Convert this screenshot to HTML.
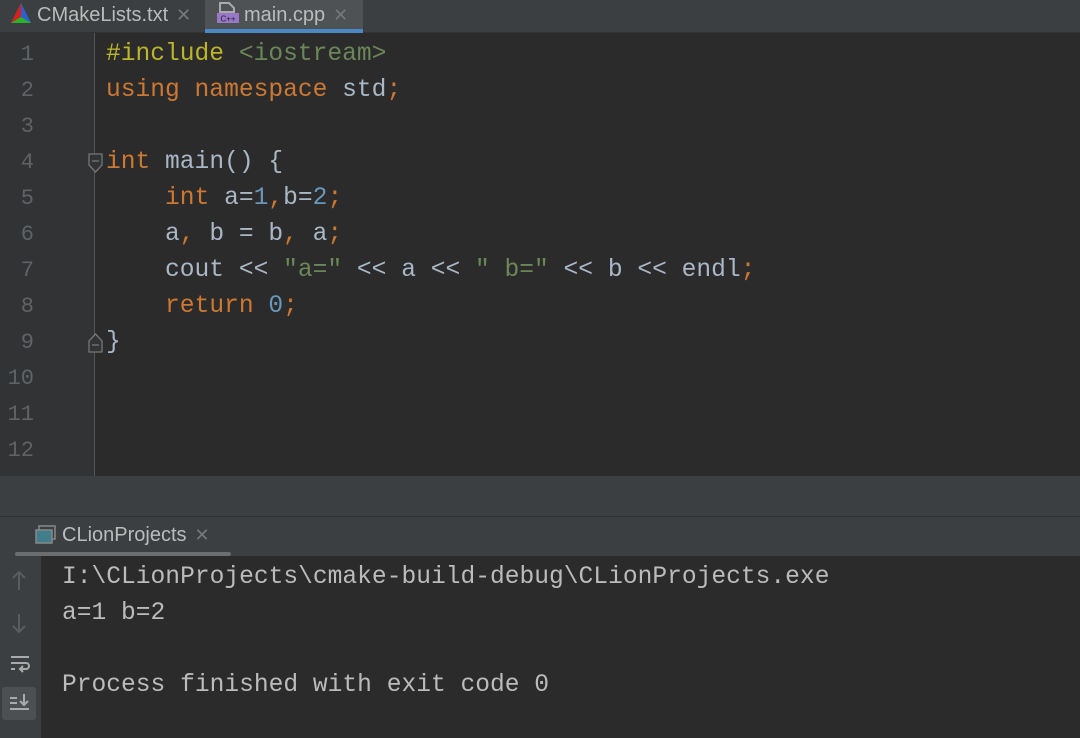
<!DOCTYPE html>
<html><head><style>
*{margin:0;padding:0;box-sizing:border-box}
body{width:1080px;height:738px;overflow:hidden;background:#2b2b2b;font-family:"Liberation Sans",sans-serif;position:relative}
.tabs{position:absolute;left:0;top:0;width:1080px;height:33px;background:#3c3f41;border-bottom:1px solid #323232}
.tab{position:absolute;top:0;height:33px;color:#bbb;font-size:20px;line-height:30px}
.x{color:#777;font-size:18px;margin-left:8px}
.gut{position:absolute;left:0;top:33px;width:95px;height:443px;background:#313335;border-right:1px solid #555}
.mono{font-family:"Liberation Mono","DejaVu Sans Mono",monospace;font-size:24.6px;white-space:pre;line-height:36px}
.mono div{line-height:36px}
.ln{position:absolute;left:0;width:34px;text-align:right;color:#606366;font-size:22px}
.code{position:absolute;left:106px;color:#a9b7c6}
.k{color:#cc7832}.n{color:#6897bb}.s{color:#6a8759}.p{color:#bbb529}
.gap{position:absolute;left:0;top:476px;width:1080px;height:40px;background:#3c3f41}
.ctabs{position:absolute;left:0;top:516px;width:1080px;height:40px;background:#3c3f41;border-top:1px solid #323232}
.side{position:absolute;left:0;top:556px;width:41px;height:182px;background:#3c3f41}
.out{position:absolute;left:62px;color:#bbbbbb}
</style></head><body>
<div class="tabs">
  <div class="tab" style="left:10px"><svg width="22" height="22" viewBox="0 0 22 22" style="vertical-align:-3px"><polygon points="11,1 21,21 1,21" fill="#1a9e2a"/><polygon points="11,1 11,15 1,21" fill="#d62020"/><polygon points="11,1 21,21 11,15" fill="#2d5fd0"/><polygon points="1,21 11,15 21,21" fill="#2ab22a"/></svg><span style="margin-left:5px">CMakeLists.txt</span><span class="x">✕</span></div>
  <div style="position:absolute;left:205px;top:0;width:158px;height:33px;background:#4e5254;border-bottom:4px solid #4a88c7"></div>
  <div class="tab" style="left:217px"><svg width="22" height="22" viewBox="0 0 22 22" style="vertical-align:-3px"><path d="M3 1h9l5 5v4H3z" fill="none" stroke="#aaa" stroke-width="2"/><rect x="0" y="11" width="22" height="10" fill="#9877c8"/><text x="11" y="19.5" font-size="8" fill="#222" text-anchor="middle" font-family="Liberation Sans">C++</text></svg><span style="margin-left:5px">main.cpp</span><span class="x">✕</span></div>
</div>
<div class="gut"></div>
<div class="mono">
<div class="ln" style="top:37px">1</div><div class="ln" style="top:73px">2</div><div class="ln" style="top:109px">3</div><div class="ln" style="top:145px">4</div><div class="ln" style="top:181px">5</div><div class="ln" style="top:217px">6</div><div class="ln" style="top:253px">7</div><div class="ln" style="top:289px">8</div><div class="ln" style="top:325px">9</div><div class="ln" style="top:361px">10</div><div class="ln" style="top:397px">11</div><div class="ln" style="top:433px">12</div>
<div class="code" style="top:37px"><span class="p">#include</span> <span class="s">&lt;iostream&gt;</span></div>
<div class="code" style="top:73px"><span class="k">using namespace</span> std<span class="k">;</span></div>
<div class="code" style="top:145px"><span class="k">int</span> main() {</div>
<div class="code" style="top:181px">    <span class="k">int</span> a=<span class="n">1</span><span class="k">,</span>b=<span class="n">2</span><span class="k">;</span></div>
<div class="code" style="top:217px">    a<span class="k">,</span> b = b<span class="k">,</span> a<span class="k">;</span></div>
<div class="code" style="top:253px">    cout &lt;&lt; <span class="s">"a="</span> &lt;&lt; a &lt;&lt; <span class="s">" b="</span> &lt;&lt; b &lt;&lt; endl<span class="k">;</span></div>
<div class="code" style="top:289px">    <span class="k">return</span> <span class="n">0</span><span class="k">;</span></div>
<div class="code" style="top:325px">}</div>
</div>
<svg style="position:absolute;left:88px;top:153px" width="16" height="22"><path d="M1 1h13v11l-6.5 7L1 12z" fill="#313335" stroke="#777" stroke-width="1.3"/><path d="M4 8h7" stroke="#777" stroke-width="1.3"/></svg>
<svg style="position:absolute;left:88px;top:331px" width="16" height="22"><path d="M1 21h13V10L7.5 3 1 10z" fill="#313335" stroke="#777" stroke-width="1.3"/><path d="M4 14h7" stroke="#777" stroke-width="1.3"/></svg>
<div class="gap"></div>
<div class="ctabs">
  <svg style="position:absolute;left:35px;top:8px" width="22" height="20"><rect x="4" y="1" width="16" height="13" fill="none" stroke="#888" stroke-width="1.5"/><rect x="1" y="5" width="16" height="13" fill="#3f7e8a" stroke="#888" stroke-width="1.5"/></svg>
  <div class="tab" style="left:62px;top:3px;">CLionProjects<span class="x">✕</span></div>
  <div style="position:absolute;left:15px;top:35px;width:216px;height:4px;background:#6b6e70;border-radius:2px"></div>
</div>
<div class="side">
  <svg style="position:absolute;left:10px;top:14px" width="18" height="22"><path d="M9 2v18M3 8l6-6 6 6" fill="none" stroke="#5a5d5f" stroke-width="2"/></svg>
  <svg style="position:absolute;left:10px;top:56px" width="18" height="22"><path d="M9 2v18M3 14l6 6 6-6" fill="none" stroke="#5a5d5f" stroke-width="2"/></svg>
  <svg style="position:absolute;left:9px;top:98px" width="22" height="20"><path d="M2 3h18M2 9h15a3 3 0 0 1 0 6h-5M14 12l-3 3 3 3M2 15h4" fill="none" stroke="#aaa" stroke-width="2"/></svg>
  <div style="position:absolute;left:2px;top:131px;width:34px;height:33px;background:#4c5052;border-radius:3px"></div>
  <svg style="position:absolute;left:9px;top:137px" width="22" height="22"><path d="M1 5h7M1 10h7M1 16h19M15 1v11M11 8l4 4 4-4" fill="none" stroke="#aaa" stroke-width="2"/></svg>
</div>
<div class="mono">
<div class="out" style="top:560px">I:\CLionProjects\cmake-build-debug\CLionProjects.exe</div>
<div class="out" style="top:596px">a=1 b=2</div>
<div class="out" style="top:668px">Process finished with exit code 0</div>
</div>
</body></html>
